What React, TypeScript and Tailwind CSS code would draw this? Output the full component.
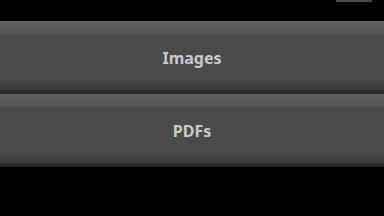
import React from 'react';

function ListButton({ label }: { label: string }) {
  return (
    <button
      type="button"
      className="w-full h-[73px] flex items-center justify-center text-[16px] font-bold text-[#c9c9c9] bg-[linear-gradient(to_bottom,#6a6a6a_0px,#5b5b5b_2px,#575757_11px,#4b4b4b_14px,#4a4a4a_60px,#414141_63px,#3d3d3d_68px,#2a2a2a_70px,#262626_73px)]"
      style={{ fontFamily: '"Noto Sans", "Open Sans", sans-serif' }}
    >
      {label}
    </button>
  );
}

export default function App() {
  return (
    <div className="w-[384px] h-[216px] bg-black overflow-hidden relative">
      {/* status strip at the top edge */}
      <div className="absolute top-0 right-[12px] w-[36px] h-[2px] bg-[#4a4a4a]" />
      <div className="pt-[21px] flex flex-col">
        <ListButton label="Images" />
        <ListButton label="PDFs" />
      </div>
    </div>
  );
}
